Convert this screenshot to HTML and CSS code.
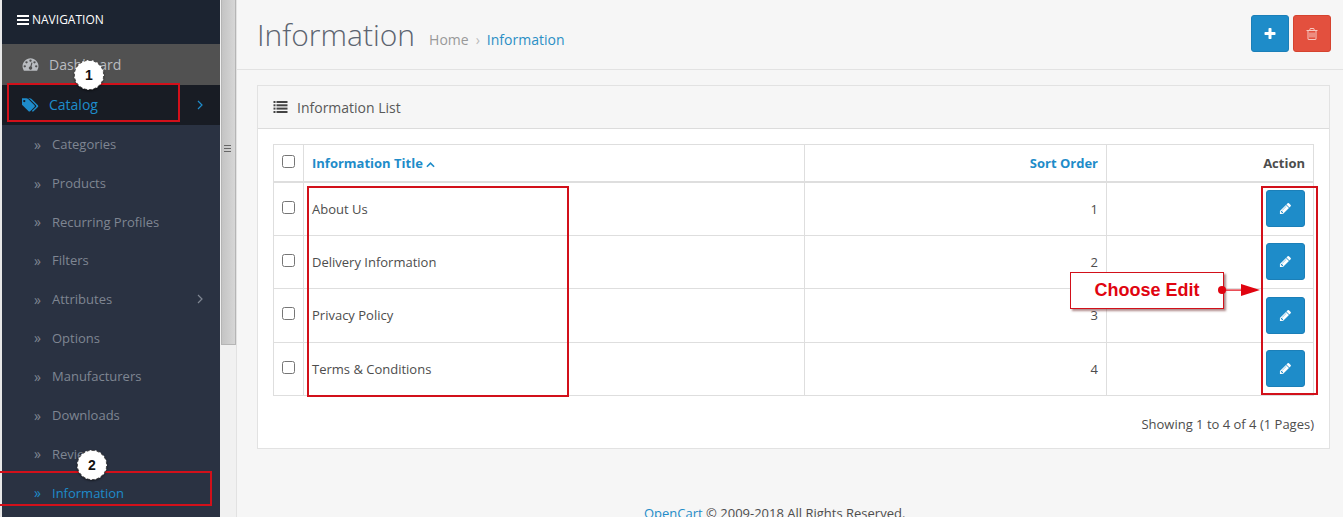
FILE: index.html
```html
<!doctype html>
<html>
<head>
    <meta charset="utf-8" />
    <title>Information</title>
    <link rel="stylesheet" href="styles.css">
</head>
<body>
    <div class="edge"></div>
    <div id="column-left">
        <div id="navigation">
            <svg class="ico-bars" viewBox="0 0 12 10"><rect width="12" height="2"/><rect y="4" width="12" height="2"/><rect y="8" width="12" height="2"/></svg>
            NAVIGATION
        </div>
        <ul id="menu">
            <li class="top dash">
                <svg class="ico-top" viewBox="0 0 1792 1792"><path d="M384 1152q0-53-37.5-90.5t-90.5-37.5-90.5 37.5-37.5 90.5 37.5 90.5 90.5 37.5 90.5-37.5 37.5-90.5zm192-448q0-53-37.5-90.5t-90.5-37.5-90.5 37.5-37.5 90.5 37.5 90.5 90.5 37.5 90.5-37.5 37.5-90.5zm428 481l101-382q6-26-7.5-48.5t-38.5-29.5-48 6.5-30 39.5l-101 382q-60 5-107 43.5t-63 98.5q-20 77 20 146t117 89 146-20 89-117q16-60-6-117t-72-91zm660-33q0-53-37.5-90.5t-90.5-37.5-90.5 37.5-37.5 90.5 37.5 90.5 90.5 37.5 90.5-37.5 37.5-90.5zm-640-640q0-53-37.5-90.5t-90.5-37.5-90.5 37.5-37.5 90.5 37.5 90.5 90.5 37.5 90.5-37.5 37.5-90.5zm448 192q0-53-37.5-90.5t-90.5-37.5-90.5 37.5-37.5 90.5 37.5 90.5 90.5 37.5 90.5-37.5 37.5-90.5zm320 448q0 261-141 483-19 29-54 29h-1402q-35 0-54-29-141-221-141-483 0-182 71-348t191-286 286-191 348-71 348 71 286 191 191 286 71 348z"/></svg>
                Dashboard
            </li>
            <li class="top catalog">
                <svg class="ico-top" viewBox="0 0 1920 1792"><path d="M384 448q0-53-37.5-90.5t-90.5-37.5-90.5 37.5-37.5 90.5 37.5 90.5 90.5 37.5 90.5-37.5 37.5-90.5zm1067 576q0 53-37 90l-491 492q-39 37-91 37-53 0-90-37l-715-716q-38-37-64.5-101t-26.5-117v-416q0-52 38-90t90-38h416q53 0 117 26.5t102 64.5l715 714q37 39 37 91zm384 0q0 53-37 90l-491 492q-39 37-91 37-36 0-59-14t-53-45l470-470q37-37 37-90 0-52-37-91l-715-714q-38-38-102-64.5t-117-26.5h224q53 0 117 26.5t102 64.5l715 714q37 39 37 91z"/></svg>
                Catalog
                <svg class="chev" viewBox="0 0 6 10"><path d="M1 1l4 4-4 4"/></svg>
            </li>
            <li class="sub"><span class="dbl">»</span>Categories</li>
            <li class="sub"><span class="dbl">»</span>Products</li>
            <li class="sub"><span class="dbl">»</span>Recurring Profiles</li>
            <li class="sub"><span class="dbl">»</span>Filters</li>
            <li class="sub"><span class="dbl">»</span>Attributes<svg class="chev" viewBox="0 0 6 10"><path d="M1 1l4 4-4 4"/></svg></li>
            <li class="sub"><span class="dbl">»</span>Options</li>
            <li class="sub"><span class="dbl">»</span>Manufacturers</li>
            <li class="sub"><span class="dbl">»</span>Downloads</li>
            <li class="sub"><span class="dbl">»</span>Reviews</li>
            <li class="sub active"><span class="dbl">»</span>Information</li>
        </ul>
    </div>
    <div class="gutter">
        <div class="thumb"></div>
        <div class="grip"></div>
    </div>
    <div id="content">
        <div class="page-header">
            <h1>Information</h1>
            <span class="crumb">Home</span>
            <span class="crumb-sep">›</span>
            <span class="crumb-on">Information</span>
            <div class="head-btns">
                <a class="btn btn-blue"><svg class="ico-btn" viewBox="0 0 1792 1792"><path d="M1600 736v192q0 40-28 68t-68 28h-416v416q0 40-28 68t-68 28h-192q-40 0-68-28t-28-68v-416h-416q-40 0-68-28t-28-68v-192q0-40 28-68t68-28h416v-416q0-40 28-68t68-28h192q40 0 68 28t28 68v416h416q40 0 68 28t28 68z"/></svg></a>
                <a class="btn btn-red"><svg class="ico-btn" viewBox="0 0 1792 1792"><path d="M704 736v576q0 14-9 23t-23 9h-64q-14 0-23-9t-9-23v-576q0-14 9-23t23-9h64q14 0 23 9t9 23zm256 0v576q0 14-9 23t-23 9h-64q-14 0-23-9t-9-23v-576q0-14 9-23t23-9h64q14 0 23 9t9 23zm256 0v576q0 14-9 23t-23 9h-64q-14 0-23-9t-9-23v-576q0-14 9-23t23-9h64q14 0 23 9t9 23zm128 724v-948h-896v948q0 22 7 40.5t14.5 27 10.5 8.5h832q3 0 10.5-8.5t14.5-27 7-40.5zm-672-1076h448l-48-117q-7-9-17-11h-317q-10 2-17 11zm928 32v64q0 14-9 23t-23 9h-96v948q0 83-47 143.5t-113 60.5h-832q-66 0-113-58.5t-47-141.5v-952h-96q-14 0-23-9t-9-23v-64q0-14 9-23t23-9h309l70-167q15-37 54-63t79-26h320q40 0 79 26t54 63l70 167h309q14 0 23 9t9 23z"/></svg></a>
            </div>
        </div>
        <div class="panel">
            <div class="panel-heading">
                <svg class="ico-list" viewBox="0 0 14 12"><rect width="2" height="2"/><rect x="3" width="11" height="2"/><rect y="3.3" width="2" height="2"/><rect x="3" y="3.3" width="11" height="2"/><rect y="6.6" width="2" height="2"/><rect x="3" y="6.6" width="11" height="2"/><rect y="10" width="2" height="2"/><rect x="3" y="10" width="11" height="2"/></svg>
                Information List
            </div>
            <div class="panel-body">
                <table>
                    <thead>
                        <tr>
                            <th class="c-check"><input type="checkbox"></th>
                            <th class="c-title link">Information Title <svg class="caret" viewBox="0 0 10 6"><path d="M1 5l4-4 4 4"/></svg></th>
                            <th class="c-sort link">Sort Order</th>
                            <th class="c-action">Action</th>
                        </tr>
                    </thead>
                    <tbody>
                        <tr>
                            <td class="c-check"><input type="checkbox"></td>
                            <td>About Us</td>
                            <td class="num">1</td>
                            <td class="c-action"><a class="btn btn-blue btn-edit"><svg class="ico-edit" viewBox="0 0 1792 1792"><path d="M491 1536l91-91-235-235-91 91v107h128v128h107zm523-928q0-22-22-22-10 0-17 7l-542 542q-7 7-7 17 0 22 22 22 10 0 17-7l542-542q7-7 7-17zm-54-192l416 416-832 832h-416v-416zm683 96q0 53-37 90l-166 166-416-416 166-165q36-38 90-38 53 0 91 38l235 234q37 39 37 91z"/></svg></a></td>
                        </tr>
                        <tr>
                            <td class="c-check"><input type="checkbox"></td>
                            <td>Delivery Information</td>
                            <td class="num">2</td>
                            <td class="c-action"><a class="btn btn-blue btn-edit"><svg class="ico-edit" viewBox="0 0 1792 1792"><path d="M491 1536l91-91-235-235-91 91v107h128v128h107zm523-928q0-22-22-22-10 0-17 7l-542 542q-7 7-7 17 0 22 22 22 10 0 17-7l542-542q7-7 7-17zm-54-192l416 416-832 832h-416v-416zm683 96q0 53-37 90l-166 166-416-416 166-165q36-38 90-38 53 0 91 38l235 234q37 39 37 91z"/></svg></a></td>
                        </tr>
                        <tr>
                            <td class="c-check"><input type="checkbox"></td>
                            <td>Privacy Policy</td>
                            <td class="num">3</td>
                            <td class="c-action"><a class="btn btn-blue btn-edit"><svg class="ico-edit" viewBox="0 0 1792 1792"><path d="M491 1536l91-91-235-235-91 91v107h128v128h107zm523-928q0-22-22-22-10 0-17 7l-542 542q-7 7-7 17 0 22 22 22 10 0 17-7l542-542q7-7 7-17zm-54-192l416 416-832 832h-416v-416zm683 96q0 53-37 90l-166 166-416-416 166-165q36-38 90-38 53 0 91 38l235 234q37 39 37 91z"/></svg></a></td>
                        </tr>
                        <tr>
                            <td class="c-check"><input type="checkbox"></td>
                            <td>Terms &amp; Conditions</td>
                            <td class="num">4</td>
                            <td class="c-action"><a class="btn btn-blue btn-edit"><svg class="ico-edit" viewBox="0 0 1792 1792"><path d="M491 1536l91-91-235-235-91 91v107h128v128h107zm523-928q0-22-22-22-10 0-17 7l-542 542q-7 7-7 17 0 22 22 22 10 0 17-7l542-542q7-7 7-17zm-54-192l416 416-832 832h-416v-416zm683 96q0 53-37 90l-166 166-416-416 166-165q36-38 90-38 53 0 91 38l235 234q37 39 37 91z"/></svg></a></td>
                        </tr>
                    </tbody>
                </table>
                <div class="showing">Showing 1 to 4 of 4 (1 Pages)</div>
            </div>
        </div>
        <div class="footer"><a>OpenCart</a> © 2009-2018 All Rights Reserved.</div>
    </div>

    <!-- tutorial marks drawn over the screenshot -->
    <div class="mark mark-catalog"></div>
    <div class="mark mark-info"></div>
    <div class="mark mark-titles"></div>
    <div class="mark mark-actions"></div>
    <div class="step step-1">1</div>
    <div class="step step-2">2</div>
    <div class="callout">Choose Edit</div>
    <svg class="pointer" viewBox="0 0 44 14"><circle cx="4" cy="7" r="4"/><rect x="4" y="6.5" width="26" height="1.2"/><path d="M23 1l19 6-19 6z"/></svg>
</body>
</html>
```

FILE: styles.css
```css
*{
    box-sizing:border-box;
}
html,body{
    height:517px;
}
body{
    position:relative;
    display:flex;
    margin:0;
    overflow:hidden;
    background-color:#f6f6f6;
    font-family:"Open Sans","Liberation Sans",sans-serif;
    font-size:13px;
    color:#4d4d4d;
}
.edge{
    width:2px;
    background-color:#e8e8e8;
}

/* sidebar */
#column-left{
    width:218px;
    flex:none;
    background-color:#2a3242;
}
#navigation{
    display:flex;
    align-items:center;
    gap:3px;
    height:44px;
    padding:0 0 5px 15px;
    background-color:#1c2431;
    font-size:12px;
    color:#fff;
}
.ico-bars{
    width:12px;
    height:10px;
    fill:#fff;
}
#menu{
    margin:0;
    padding:0;
    list-style:none;
}
.top{
    display:flex;
    align-items:center;
    height:40.5px;
    padding-left:20px;
    font-size:14px;
}
.ico-top{
    width:17px;
    height:16px;
    margin-right:10px;
    fill:currentColor;
}
.dash{
    background-color:#515151;
    color:#b9bcc0;
}
.catalog{
    background-color:#181c24;
    color:#1e8ccb;
}
.chev{
    width:6px;
    height:10px;
    margin-left:auto;
    margin-right:17px;
    fill:none;
    stroke:currentColor;
    stroke-width:1.2;
}
.sub{
    display:flex;
    align-items:center;
    height:38.7px;
    padding-left:32px;
    color:#7f8692;
}
.dbl{
    width:18px;
    font-size:14px;
}
.active{
    color:#1e8ccb;
}
.gutter{
    position:relative;
    width:17px;
    flex:none;
    background-color:#f1f1f1;
    border-right:1px solid #e2e2e2;
}
.thumb{
    height:345px;
    margin-left:1px;
    background:linear-gradient(to right,#c4c4c4,#d6d6d6);
    border:1px solid #b5b5b5;
    border-top:0;
}
.grip{
    position:absolute;
    left:4px;
    top:145px;
    width:7px;
    height:8px;
    background:repeating-linear-gradient(to bottom,#666 0,#666 1px,transparent 1px,transparent 3px);
}

/* content */
#content{
    flex:1;
    min-width:0;
}
.page-header{
    display:flex;
    align-items:center;
    height:70px;
    padding:0 12px 0 20px;
    border-bottom:1px solid #e2e2e2;
}
.page-header h1{
    margin:0 14px 0 0;
    font-size:30px;
    font-weight:300;
    color:#5c6470;
}
.crumb{
    margin-top:10px;
    font-size:14px;
    color:#999;
}
.crumb-sep{
    margin:10px 7px 0;
    font-size:14px;
    color:#bbb;
}
.crumb-on{
    margin-top:10px;
    font-size:14px;
    color:#2b8fc5;
}
.head-btns{
    display:flex;
    gap:4px;
    margin-left:auto;
    margin-bottom:2px;
}
.btn{
    display:flex;
    align-items:center;
    justify-content:center;
    width:38px;
    height:37px;
    border-radius:3px;
}
.btn-blue{
    background-color:#1e8cc9;
    border:1px solid #1b7fb8;
}
.btn-red{
    background-color:#e3503e;
    border:1px solid #d5432f;
}
.ico-btn{
    width:14px;
    height:14px;
    fill:#fff;
}
.btn-red .ico-btn{
    fill:#f6c9c2;
}
.panel{
    margin:15px 13px 0 20px;
    background-color:#fff;
    border:1px solid #e2e2e2;
    height:364px;
}
.panel-heading{
    display:flex;
    align-items:center;
    gap:9px;
    height:43px;
    padding-left:15px;
    background-color:#f6f6f6;
    border-bottom:1px solid #dcdcdc;
    font-size:14px;
    color:#595959;
}
.ico-list{
    width:15px;
    height:12px;
    fill:#444;
}
.panel-body{
    padding:15px;
}
table{
    width:100%;
    border-collapse:collapse;
    table-layout:fixed;
}
th,td{
    padding:0 8px;
    border:1px solid #dedede;
    height:53.5px;
    text-align:left;
    font-size:13px;
}
th{
    height:37px;
    border-bottom-width:2px;
    font-weight:700;
}
.c-check{
    width:30px;
    padding:0;
    text-align:center;
}
.c-check input{
    width:13px;
    height:13px;
    margin:0 0 4px;
}
.c-title{
    width:501px;
}
.c-sort{
    width:302px;
    text-align:right;
}
.c-action{
    text-align:right;
}
.link{
    color:#1e8cc9;
}
.num{
    text-align:right;
}
.caret{
    width:9px;
    height:6px;
    fill:none;
    stroke:currentColor;
    stroke-width:1.8;
}
.btn-edit{
    display:inline-flex;
    width:39px;
    vertical-align:middle;
}
.ico-edit{
    width:13px;
    height:13px;
    fill:#fff;
}
.showing{
    margin-top:19px;
    text-align:right;
}
.footer{
    margin-top:55px;
    margin-left:407px;
}
.footer a{
    color:#1e8cc9;
}

/* tutorial marks */
.mark{
    position:absolute;
    border:2px solid #d2101a;
}
.mark-catalog{
    left:7px;
    top:83px;
    width:173px;
    height:39px;
}
.mark-info{
    left:-2px;
    top:471px;
    width:214px;
    height:35px;
}
.mark-titles{
    left:307px;
    top:186px;
    width:262px;
    height:211px;
}
.mark-actions{
    left:1261px;
    top:186px;
    width:57px;
    height:209px;
}
.step{
    position:absolute;
    width:30px;
    height:30px;
    border:1px dashed #555;
    border-radius:50%;
    background-color:#fff;
    box-shadow:0 1px 2px rgba(0,0,0,.5);
    font-family:"Liberation Sans",sans-serif;
    font-size:14px;
    font-weight:700;
    line-height:28px;
    text-align:center;
    color:#111;
}
.step-1{
    left:74px;
    top:60px;
}
.step-2{
    left:77px;
    top:450px;
}
.callout{
    position:absolute;
    left:1070px;
    top:272px;
    width:154px;
    height:37px;
    background-color:#fff;
    border:1px solid #d2101a;
    box-shadow:2px 2px 2px rgba(120,60,60,.6);
    font-family:"Liberation Sans",sans-serif;
    font-size:18px;
    font-weight:700;
    line-height:35px;
    text-align:center;
    color:#e00410;
}
.pointer{
    position:absolute;
    left:1218px;
    top:283px;
    width:44px;
    height:14px;
    fill:#e00410;
}
```
